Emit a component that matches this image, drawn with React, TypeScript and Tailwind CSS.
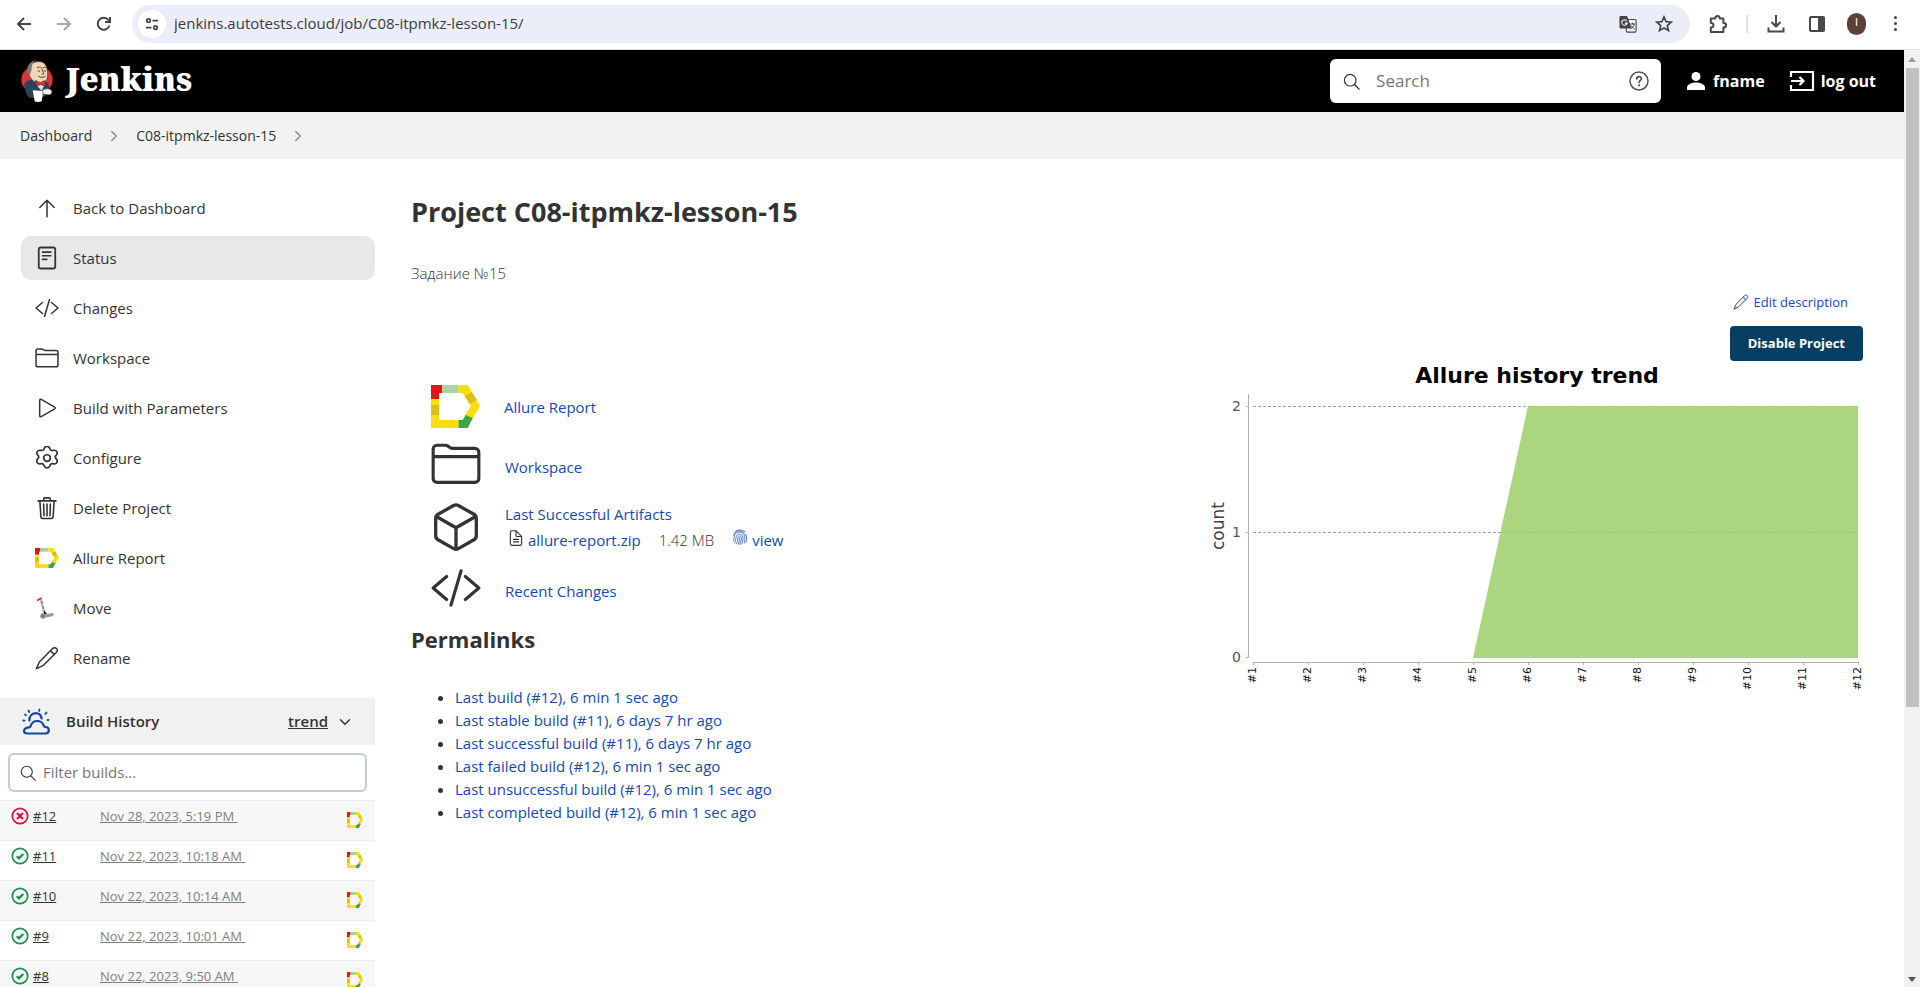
import React from 'react';

const linkColor = 'text-[#1649ad]';

type P = { className?: string };

const Allure = ({ className }: P) => (
  <svg viewBox="0 0 48 43" preserveAspectRatio="none" className={className} aria-hidden="true">
    <path fill="#ffdd0b" d="M0 14h8v21h19v8H0z" />
    <path fill="#dcc00f" d="M0 20h8v10H0z" />
    <path fill="#e1141c" d="M0 0h11v14H0z" />
    <path fill="#fff" d="M8 8h4v7H8z" />
    <path fill="#a8d3a2" d="M11 0h16v8H11z" />
    <path fill="#ffdd0b" d="M27 0h9l12 21-8 14-7-4 6-10-8-13h-4z" />
    <path fill="#dcc00f" d="M40 7l5 8-7 4-5-8z" />
    <path fill="#3fa648" d="M34 30l7 3-5 10h-9v-8h4z" />
  </svg>
);

const line = {
  fill: 'none',
  stroke: 'currentColor',
  strokeLinecap: 'round' as const,
  strokeLinejoin: 'round' as const,
  viewBox: '0 0 512 512',
  'aria-hidden': true,
};

const ArrowUp = ({ className }: P) => (
  <svg {...line} strokeWidth="32" className={className}>
    <path d="M102 244 256 90l154 154M256 100v340" />
  </svg>
);
const StatusIcon = ({ className }: P) => (
  <svg {...line} strokeWidth="38" className={className}>
    <rect x="80" y="32" width="352" height="448" rx="44" />
    <path d="M160 130h180M160 208h180M160 286h90" strokeWidth="34" />
  </svg>
);
const Code = ({ className }: P) => (
  <svg {...line} strokeWidth="32" className={className}>
    <path d="M160 374 22 256l138-118M352 374l138-118-138-118M308 80l-104 352" />
  </svg>
);
const Folder = ({ className }: P) => (
  <svg {...line} strokeWidth="32" className={className}>
    <path d="M450 444H62a40 40 0 0 1-40-40V104a40 40 0 0 1 40-40h85.900a40 40 0 0 1 22.200 6.700l27.800 18.600a40 40 0 0 0 22.200 6.700H450a40 40 0 0 1 40 40v268a40 40 0 0 1-40 40zM22 180h468" />
  </svg>
);
const Play = ({ className }: P) => (
  <svg {...line} strokeWidth="32" className={className}>
    <path d="M100 91v330c0 17.400 17 28.500 31 20.200l290-168.400c12.100-7.200 12.100-26.400 0-33.600L131 70.800c-14-8.300-31 2.800-31 20.200z" />
  </svg>
);
const Gear = ({ className }: P) => (
  <svg {...line} strokeWidth="34" viewBox="20 12 472 472" className={className}>
    <path d="M206 48c10-18 26-28 50-28s40 10 50 28l12 30c8 16 24 24 42 22l36-4c24-2 40 6 52 26 12 21 12 38 0 58l-20 24c-10 14-10 34 0 48l20 28c13 20 12 38 0 58-11 20-28 28-52 26l-34-4c-18-2-34 6-42 22l-14 32c-10 20-26 28-50 28s-40-8-50-28l-14-32c-8-16-24-24-42-22l-34 4c-24 2-41-6-52-26-12-20-13-38 0-58l20-28c10-14 10-34 0-48l-20-24c-12-20-12-37 0-58 12-20 28-28 52-26l36 4c18 2 34-6 42-22z" />
    <circle cx="256" cy="250" r="66" />
  </svg>
);
const Trash = ({ className }: P) => (
  <svg {...line} strokeWidth="34" className={className}>
    <path d="m104 112 22 336c.950 18.490 14.400 32 32 32h196c17.670 0 30.870-13.510 32-32l22-336M64 104h384M186 104V64a24 24 0 0 1 24-24h92a24 24 0 0 1 24 24v40M256 170v250M184 170l8 250M328 170l-8 250" />
  </svg>
);
const Pencil = ({ className }: P) => (
  <svg {...line} strokeWidth="32" className={className}>
    <path d="M376 52c24-24 62-22 82 0s22 56 0 80L170 420 30 484l62-142zM330 100l82 80" />
  </svg>
);
const Search = ({ className }: P) => (
  <svg {...line} strokeWidth="32" className={className}>
    <path d="M221 64a157 157 0 1 0 157 157A157 157 0 0 0 221 64zM338 338l126 126" />
  </svg>
);
const Box = ({ className }: P) => (
  <svg {...line} strokeWidth="34" className={className}>
    <path d="M464 345V167a48 48 0 0 0-24-41L280 36a48 48 0 0 0-48 0L72 126a48 48 0 0 0-24 41v178a48 48 0 0 0 24 42l160 90a48 48 0 0 0 48 0l160-90a48 48 0 0 0 24-42zM55 149l201 115 201-115M256 482V264" />
  </svg>
);
const Scooter = ({ className }: P) => (
  <svg viewBox="0 0 24 24" fill="none" className={className} aria-hidden="true">
    <path d="M6 3.500 9.500 18" stroke="#c9c9c9" strokeWidth="2.600" />
    <path d="M6.500 5 9 15" stroke="#555" strokeWidth="1" strokeDasharray="3 2" />
    <path d="M2 4.500 7 2" stroke="#b33a48" strokeWidth="1.600" />
    <path d="M8 18.500 18.500 17v3L9 22z" fill="#9b9b9b" />
    <circle cx="8" cy="20" r="2.500" fill="#777" stroke="#aaa" />
    <path d="m9 14 3 4H9z" fill="#222" />
  </svg>
);
const Weather = ({ className }: P) => (
  <svg viewBox="0 0 28 28" fill="none" stroke="currentColor" strokeLinecap="round" strokeLinejoin="round" className={className} aria-hidden="true">
    <path d="M5.500 25.500h18c2 0 3.300-1.300 3.300-3.200s-1.400-3.200-3.300-3.300c-.9 0-1.300-.3-1.600-1-1.100-3.200-3.300-5-6.700-5-3.300 0-5.600 2-6.500 5-.2.800-.7 1.200-1.600 1.300C4.500 19.600 2 21 2 23c0 1.800 1.500 2.500 3.500 2.500z" strokeWidth="2.200" />
    <path d="M7.500 12.500c-.6-4 2.300-7.300 6-7.300 3.200 0 5.600 2 6.200 5.300" strokeWidth="2.200" />
    <path d="m6.500 2.500.8 1.500M17.500 1.500l-.4 1.500M24.500 4.500 23.300 6M1.200 12.500l1.300.1M25.500 12h1M3 6.500l1 .8" strokeWidth="1.800" />
  </svg>
);
const Fingerprint = ({ className }: P) => (
  <svg {...line} strokeWidth="24" className={className}>
    <path d="M110 84C190 10 330 10 410 92M48 200C92 40 280 6 392 132M440 170c40 80 30 170 10 250M50 370c30-60 0-110 38-190C140 78 310 60 380 170c48 74 38 190 14 280M84 430c54-70 34-120 48-180 28-104 166-120 206-30 30 70 12 180-24 260M136 470c54-70 48-130 56-200 8-60 92-70 106-8 14 70-12 150-52 234M196 490c36-70 50-130 50-210" />
  </svg>
);
const Doc = ({ className }: P) => (
  <svg {...line} strokeWidth="36" className={className}>
    <path d="M436 221v221a48 48 0 0 1-48 48H124a48 48 0 0 1-48-48V70a48 48 0 0 1 48-48h113a32 32 0 0 1 23 9l167 167a32 32 0 0 1 9 23zM256 40v136a32 32 0 0 0 32 32h130M176 300h160M176 380h160" />
  </svg>
);

const Butler = ({ className }: P) => (
  <svg viewBox="24 22 102 132" className={className} aria-hidden="true">
    <ellipse cx="75" cy="84" rx="47" ry="42" fill="#d33833" />
    <path d="M37 96c6-8 14-10 20-13l30 2 16 5c7 6 10 16 10 26l-12 16-16 8-33-2c-10-10-15-26-15-42z" fill="#2b4254" />
    <path d="M54 42c8-14 38-18 47-2 7 14 8 34 3 46-8 11-30 11-40 2-9-7-15-20-14-32 0-6 1-10 4-14z" fill="#f0d6b7" stroke="#3a2a24" strokeWidth="2" />
    <path d="M49 68c-10-18 2-38 22-42-9 7-13 16-12 26l-4 14z" fill="#7a777a" />
    <path d="M76 48c3-3 9-3 12 0M93 48c3-2 6-2 8 1M90 52l5 14-5 2M78 58h5M97 58h4M80 74c6 5 14 4 20 0" fill="none" stroke="#3a2a24" strokeWidth="2.500" strokeLinecap="round" />
    <path d="m70 86 15 7 14-7 1 17-14-5-13 6z" fill="#d33833" stroke="#5c1515" strokeWidth="1.500" />
    <path d="m76 104 9-5 11 4-7 14z" fill="#d9dde0" />
    <path d="m62 116 32 2-5 31c-6 3-16 3-21 0z" fill="#fff" />
    <path d="M92 116c6-6 22-6 27 1 3 8-4 14-12 12l-14-2z" fill="#f4efe9" stroke="#3a2a24" strokeWidth="1.500" />
  </svg>
);

const Tune = ({ className }: P) => (
  <svg viewBox="0 0 16 16" fill="none" stroke="currentColor" strokeWidth="2" className={className} aria-hidden="true">
    <circle cx="4" cy="4" r="2" />
    <path d="M8.500 4H15M1 12h6.500" />
    <circle cx="12" cy="12" r="2" />
  </svg>
);
const Puzzle = ({ className }: P) => (
  <svg viewBox="0 0 20 22" fill="none" stroke="currentColor" strokeWidth="2.200" strokeLinejoin="round" className={className} aria-hidden="true">
    <path d="M2 5h5c0-4 5-4 5 0h4v5c4 0 4 5 0 5v5H2v-5c4 0 4-5 0-5z" />
  </svg>
);
const Translate = ({ className }: P) => (
  <svg viewBox="0 0 20 20" className={className} aria-hidden="true">
    <rect x="8" y="5" width="11" height="14" rx="1.500" fill="#f6f7fb" stroke="#444" strokeWidth="1.200" />
    <path d="M2 1h7l5 14H2a1.500 1.500 0 0 1-1.500-1.500v-11A1.500 1.500 0 0 1 2 1z" fill="#444" />
    <path d="M8.500 6.500A3 3 0 1 0 9 9H6.500" stroke="#fff" strokeWidth="1.200" fill="none" />
    <path d="M12 10h6M15 8.500V10M17 10c-.5 2.500-2 4-4 5.500M13.500 12l4 4" stroke="#444" strokeWidth="1.100" fill="none" />
  </svg>
);

const Chevron = ({ className }: P) => (
  <svg {...line} strokeWidth="48" className={className}>
    <path d="m184 112 144 144-144 144" />
  </svg>
);

const tasks = [
  { label: 'Back to Dashboard', Icon: ArrowUp },
  { label: 'Status', Icon: StatusIcon, active: true },
  { label: 'Changes', Icon: Code },
  { label: 'Workspace', Icon: Folder },
  { label: 'Build with Parameters', Icon: Play },
  { label: 'Configure', Icon: Gear },
  { label: 'Delete Project', Icon: Trash },
  { label: 'Allure Report', Icon: Allure, short: true },
  { label: 'Move', Icon: Scooter },
  { label: 'Rename', Icon: Pencil },
];

const builds = [
  { id: '#12', date: 'Nov 28, 2023, 5:19 PM', ok: false },
  { id: '#11', date: 'Nov 22, 2023, 10:18 AM', ok: true },
  { id: '#10', date: 'Nov 22, 2023, 10:14 AM', ok: true },
  { id: '#9', date: 'Nov 22, 2023, 10:01 AM', ok: true },
  { id: '#8', date: 'Nov 22, 2023, 9:50 AM', ok: true },
];

const permalinks = [
  'Last build (#12), 6 min 1 sec ago',
  'Last stable build (#11), 6 days 7 hr ago',
  'Last successful build (#11), 6 days 7 hr ago',
  'Last failed build (#12), 6 min 1 sec ago',
  'Last unsuccessful build (#12), 6 min 1 sec ago',
  'Last completed build (#12), 6 min 1 sec ago',
];

function BrowserBar() {
  return (
    <div className="flex h-[50px] shrink-0 items-center border-b border-[#dcdcdc] bg-white px-4 pb-[2px] text-[#474747]">
      <button aria-label="Back" className="w-10">
        <svg viewBox="0 0 16 16" fill="none" stroke="currentColor" strokeWidth="2" className="size-4">
          <path d="M15 8H2M8 2 2 8l6 6" />
        </svg>
      </button>
      <button aria-label="Forward" className="w-10 text-[#a3a3a3]">
        <svg viewBox="0 0 16 16" fill="none" stroke="currentColor" strokeWidth="2" className="size-4">
          <path d="M1 8h13M8 2l6 6-6 6" />
        </svg>
      </button>
      <button aria-label="Reload" className="w-9">
        <svg viewBox="0 0 16 16" fill="none" stroke="currentColor" strokeWidth="2" className="size-4">
          <path d="M13.500 9.500A6 6 0 1 1 12.500 4L14 5.500M14 1v5H9" />
        </svg>
      </button>
      <div className="flex h-[38px] flex-1 items-center rounded-full bg-[#ebedf8] pr-[17px] pl-[6px]">
        <button aria-label="Site information" className="flex size-7 items-center justify-center rounded-full bg-white">
          <Tune className="size-[14px]" />
        </button>
        <input
          aria-label="Address"
          defaultValue="jenkins.autotests.cloud/job/C08-itpmkz-lesson-15/"
          className="ml-2 min-w-0 flex-1 bg-transparent text-[15px] text-[#3a3b40] outline-none"
        />
        <button aria-label="Translate">
          <Translate className="h-5 w-[18px]" />
        </button>
        <button aria-label="Bookmark" className="ml-[18px]">
          <svg viewBox="0 0 18 18" fill="none" stroke="currentColor" strokeWidth="1.700" className="size-[18px]">
            <path d="m9 2 2.100 4.700 5.100.5-3.900 3.400 1.200 5L9 13l-4.500 2.600 1.200-5-3.900-3.400 5.100-.5z" />
          </svg>
        </button>
      </div>
      <div className="flex items-center pr-[5px] pl-[19px]">
        <button aria-label="Extensions">
          <Puzzle className="h-[20px] w-[18px]" />
        </button>
        <span className="mx-[19px] h-[18px] w-[2px] bg-[#d5e2f7]" />
        <button aria-label="Downloads">
          <svg viewBox="0 0 18 18" fill="none" stroke="currentColor" strokeWidth="2" className="size-[18px]">
            <path d="M9 0v11M4.500 7 9 11.500 13.500 7M1.500 12.500V16.500h15V12.500" />
          </svg>
        </button>
        <button aria-label="Side panel" className="ml-6">
          <svg viewBox="0 0 16 18" className="h-[18px] w-4">
            <rect x="1" y="2" width="14" height="14" rx="1" fill="none" stroke="currentColor" strokeWidth="2" />
            <path d="M9 2h6v14H9z" fill="currentColor" />
          </svg>
        </button>
        <button aria-label="Profile" className="ml-[22px] h-[22px] w-[19px] rounded-full bg-[#5d4037] font-['Roboto',sans-serif] text-[11px] text-white">
          I
        </button>
        <button aria-label="Menu" className="ml-[25px] flex w-2 flex-col items-center gap-[3px]">
          <span className="size-[3px] rounded-full bg-[#474747]" />
          <span className="size-[3px] rounded-full bg-[#474747]" />
          <span className="size-[3px] rounded-full bg-[#474747]" />
        </button>
      </div>
    </div>
  );
}

function Header() {
  return (
    <header className="flex h-[62px] items-center bg-black pr-7 pl-5 text-white">
      <a href="#" className="flex items-center">
        <Butler className="h-11 w-[34px]" />
        <span className="ml-3 pb-1 font-['Noto_Serif','DejaVu_Serif','Liberation_Serif',serif] text-[32px] leading-8 font-black">Jenkins</span>
      </a>
      <div className="ml-auto flex h-11 w-[331px] items-center rounded-md bg-white px-3 text-[#333]">
        <Search className="size-[19px] shrink-0" />
        <input aria-label="Search" placeholder="Search" className="ml-[15px] min-w-0 flex-1 text-[17px] outline-none placeholder:text-[#757575]" />
        <button aria-label="Help">
          <svg viewBox="0 0 20 20" fill="none" stroke="#4d545d" strokeWidth="1.500" className="size-5" strokeLinecap="round">
            <circle cx="10" cy="10" r="9" />
            <path d="M7.700 8c0-3.200 4.700-3 4.700-.3 0 1.700-2.300 1.800-2.300 3.700" strokeWidth="1.700" />
            <path d="M10 14.300v.2" strokeWidth="2" />
          </svg>
        </button>
      </div>
      <a href="#" className="ml-[26px] flex items-center gap-2 text-[16px] font-bold">
        <svg viewBox="0 0 18 18" fill="currentColor" className="size-[18px]">
          <circle cx="9" cy="4.500" r="4.500" />
          <path d="M0 18v-2.500C0 12 5 10.500 9 10.500s9 1.500 9 5V18z" />
        </svg>
        fname
      </a>
      <a href="#" className="ml-[24px] flex items-center gap-[6px] text-[16px] font-bold">
        <svg viewBox="0 0 26 22" fill="none" stroke="currentColor" strokeWidth="2.200" className="h-[22px] w-[26px]">
          <path d="M2 7V2h22v18H2v-5M2 11h12M10.500 7l4 4-4 4" />
        </svg>
        log out
      </a>
    </header>
  );
}

function Sidebar() {
  return (
    <aside className="w-[375px] shrink-0 text-[#333]">
      <nav className="flex flex-col gap-[6px] pt-[27px] pb-[18px] pl-[21px]">
        {tasks.map(({ label, Icon, active, short }) => (
          <a
            key={label}
            href="#"
            className={`flex h-11 items-center gap-[14px] rounded-[10px] pl-[14px] text-[15px] font-medium ${active ? 'bg-[#e8e8e8]' : ''}`}
          >
            <Icon className={short ? 'h-5 w-6' : 'size-6'} />
            {label}
          </a>
        ))}
      </nav>
      <div className="flex h-[47px] items-center bg-[#f1f1f1] pr-[22px] pl-[22px]">
        <Weather className="size-7 text-[#1148a8]" />
        <h2 className="ml-4 text-[15px] font-semibold">Build History</h2>
        <a href="#" className="ml-auto text-[15px] font-semibold underline">
          trend
        </a>
        <button aria-label="Collapse" className="ml-[9px]">
          <Chevron className="size-4 rotate-90" />
        </button>
      </div>
      <div className="mx-2 my-2 flex h-[39px] items-center rounded-md border-2 border-[#c3ccd1] pl-[9px]">
        <Search className="size-[18px]" />
        <input aria-label="Filter builds" placeholder="Filter builds..." className="ml-[6px] min-w-0 flex-1 text-[15px] outline-none placeholder:text-[#757575]" />
      </div>
      <table className="w-full border-collapse text-[13px]">
        <tbody>
          {builds.map((b) => (
            <tr key={b.id} className="h-10 border-t border-[#ececec] align-top odd:bg-[#f7f7f7]">
              <td className="w-[100px] pt-[5px] pl-[11px]">
                <span className="flex items-center gap-1">
                  <svg viewBox="0 0 18 18" fill="none" stroke="currentColor" strokeWidth="1.700" className={b.ok ? 'size-[18px] text-[#1e8e4f]' : 'size-[18px] text-[#d9103a]'}>
                    <circle cx="9" cy="9" r="7.700" />
                    {b.ok ? <path d="m5.700 9.300 2.200 2.100L12.300 7" strokeWidth="2.200" /> : <path d="m6 6 6 6M12 6l-6 6" strokeWidth="2.200" />}
                  </svg>
                  <a href="#" className="leading-5 underline">
                    {b.id}
                  </a>
                </span>
              </td>
              <td className="pt-[5px]">
                <a href="#" className="leading-5 whitespace-pre text-[#808080] underline">
                  {b.date + '\u00a0'}
                </a>
              </td>
              <td className="w-[28px] pt-[11px]">
                <Allure className="h-4 w-4" />
              </td>
            </tr>
          ))}
        </tbody>
      </table>
    </aside>
  );
}

function TrendChart() {
  const x = (i: number) => 40 + i * 55;
  return (
    <svg viewBox="-15 0 670 350" className="h-[350px] w-[670px]" role="img" aria-label="Allure history trend" fontFamily="DejaVu Sans, sans-serif">
      <text x="324" y="21" textAnchor="middle" fontSize="22" fontWeight="700" fill="#000">
        Allure history trend
      </text>
      <g stroke="#a0a0a0" strokeDasharray="3 2">
        <path d="M40 44.500h605M40 170.500h605" />
      </g>
      <path d="M260 296 315 44H645V296z" fill="#9dce6a" fillOpacity=".85" />
      <g stroke="#b0b0b0" fill="none">
        <path d="M35.500 32V296M33 44.500h3M33 170.500h3M33 295.500h3M40 300.500h605" />
        {Array.from({ length: 12 }, (_, i) => (
          <path key={i} d={`M${x(i) + 0.5} 300v3`} />
        ))}
      </g>
      <g fontSize="14" fill="#555" textAnchor="end">
        <text x="28" y="49">2</text>
        <text x="28" y="175">1</text>
        <text x="28" y="300">0</text>
      </g>
      <text transform="translate(11 164) rotate(-90)" fontSize="17" textAnchor="middle" fill="#444">
        count
      </text>
      {Array.from({ length: 12 }, (_, i) => (
        <text key={i} transform={`translate(${x(i) + 3} 305) rotate(-90)`} fontSize="11" textAnchor="end" fill="#111">
          {`#${i + 1}`}
        </text>
      ))}
    </svg>
  );
}

function Main() {
  return (
    <main className="min-w-0 flex-1 pr-[31px] pl-9 text-[15px] text-[#333]">
      <h1 className="pt-[35px] text-[27px] leading-9 font-bold">Project C08-itpmkz-lesson-15</h1>
      <p className="mt-[31px] leading-6 font-light">Задание №15</p>
      <div className="flex items-start justify-between">
        <div>
          <ul className="flex flex-col pt-[92px] pl-5 font-medium">
            <li className="flex h-[60px] items-center gap-6">
              <Allure className="mb-[2px] h-[43px] w-[49px]" />
              <a href="#" className={linkColor}>Allure Report</a>
            </li>
            <li className="flex h-[60px] items-center gap-6">
              <Folder className="mb-[6px] size-[50px]" />
              <a href="#" className={linkColor}>Workspace</a>
            </li>
            <li className="flex h-[60px] items-center gap-6">
              <Box className="size-[50px]" />
              <div>
                <a href="#" className={linkColor}>Last Successful Artifacts</a>
                <div className="mt-[3px] flex items-center">
                  <Doc className="mb-1 ml-[3px] size-4" />
                  <a href="#" className={`ml-1 ${linkColor}`}>allure-report.zip</a>
                  <span className="ml-[18px] font-light">1.42 MB</span>
                  <Fingerprint className="mb-[6px] ml-[18px] size-4 text-[#1b51b3]" />
                  <a href="#" className={`ml-1 ${linkColor}`}>view</a>
                </div>
              </div>
            </li>
            <li className="mt-1 flex h-[60px] items-center gap-6">
              <Code className="mb-[6px] size-[50px]" />
              <a href="#" className={linkColor}>Recent Changes</a>
            </li>
          </ul>
          <h2 className="mt-[2px] text-[22px] leading-8 font-bold">Permalinks</h2>
          <ul className="mt-[31px] list-disc pl-11 font-medium">
            {permalinks.map((p) => (
              <li key={p} className="leading-[23px]">
                <a href="#" className={linkColor}>{p}</a>
              </li>
            ))}
          </ul>
        </div>
        <div className="flex flex-col items-end pt-[7px]">
          <a href="#" className={`mr-[25px] flex items-center gap-[5px] text-[13px] leading-5 font-medium ${linkColor}`}>
            <Pencil className="size-4" />
            Edit description
          </a>
          <button className="mt-[14px] mr-[10px] h-[35px] rounded-sm bg-[#073f63] px-[18px] text-[13px] font-bold text-white">Disable Project</button>
          <div className="mr-[5px] pt-px">
            <TrendChart />
          </div>
        </div>
      </div>
    </main>
  );
}

export default function App() {
  return (
    <div className="flex h-screen flex-col overflow-hidden bg-white font-['Open_Sans','Noto_Sans',sans-serif]">
      <BrowserBar />
      <div className="flex min-h-0 flex-1">
        <div className="min-w-0 flex-1 overflow-hidden">
          <Header />
          <nav aria-label="Breadcrumb" className="flex h-[47px] items-center bg-[#f2f2f2] pl-5 text-[14px] text-[#333]">
            <a href="#">Dashboard</a>
            <Chevron className="mx-[14px] size-4 text-[#8a8a8a]" />
            <a href="#">C08-itpmkz-lesson-15</a>
            <Chevron className="mx-[14px] size-4 text-[#8a8a8a]" />
          </nav>
          <div className="flex">
            <Sidebar />
            <Main />
          </div>
        </div>
        <div className="flex w-4 shrink-0 flex-col items-center bg-[#f1f1f1]">
          <span className="flex h-[18px] items-center">
            <svg viewBox="0 0 8 5" className="h-[5px] w-2"><path d="M0 5l4-5 4 5z" fill="#a0a0a0" /></svg>
          </span>
          <span className="h-[639px] w-[13px] bg-[#c1c1c1]" />
          <span className="mt-auto flex h-4 items-center">
            <svg viewBox="0 0 8 5" className="h-[5px] w-2"><path d="M0 0h8L4 5z" fill="#505050" /></svg>
          </span>
        </div>
      </div>
    </div>
  );
}
